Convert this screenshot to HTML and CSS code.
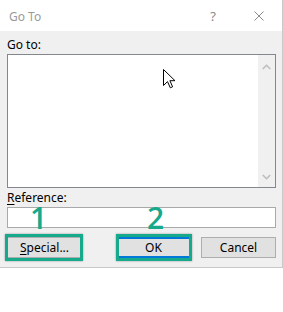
FILE: index.html
```html
<!DOCTYPE html>
<html>
<head>
<meta charset="utf-8">
<link rel="stylesheet" href="styles.css">
</head>
<body>
<div class="dialog">
  <div class="titlebar">
    <span class="title">Go To</span>
    <span class="help">?</span>
    <svg class="close" width="10" height="10" viewBox="0 0 10 10"><path d="M0.5 0.5L9.5 9.5M9.5 0.5L0.5 9.5" stroke="#8a8a8a" stroke-width="1" fill="none"/></svg>
  </div>
  <div class="content">
    <div class="label first">Go to:</div>
    <div class="listbox">
      <div class="listarea"></div>
      <div class="scrollbar">
        <svg width="9" height="6" viewBox="0 0 9 6"><path d="M0.8 5L4.5 1.3L8.2 5" stroke="#bdbdbd" stroke-width="1.6" fill="none"/></svg>
        <svg width="9" height="6" viewBox="0 0 9 6"><path d="M0.8 1L4.5 4.7L8.2 1" stroke="#bdbdbd" stroke-width="1.6" fill="none"/></svg>
      </div>
    </div>
    <div class="label"><u>R</u>eference:</div>
    <div class="input"></div>
    <div class="buttons">
      <div class="btn special hl"><u>S</u>pecial...</div>
      <div class="btn ok hl2">OK</div>
      <div class="btn cancel">Cancel</div>
    </div>
  </div>
</div>
<div class="num n1">1</div>
<div class="num n2">2</div>
<svg class="cursor" width="13" height="20" viewBox="0 0 13 20"><path d="M0.5 0.5L0.5 16.5L4.5 12.6L7.3 18.8L9.6 17.8L6.9 11.7L12 11.7Z" fill="#fff" stroke="#000" stroke-width="1" stroke-linejoin="miter"/></svg>
</body>
</html>
```
FILE: styles.css
```css
html, body {
  margin: 0;
  padding: 0;
  background: #ffffff;
}
body {
  width: 283px;
  height: 312px;
  position: relative;
  overflow: hidden;
  font-family: "Noto Sans", "Open Sans", "Liberation Sans", sans-serif;
  font-size: 12px;
  color: #000;
}
.dialog {
  border-right: 1px solid #c9c9c9;
  box-sizing: border-box;
  width: 283px;
}
.titlebar {
  height: 31px;
  background: #fff;
  display: flex;
  align-items: center;
  box-sizing: border-box;
  padding-left: 9px;
}
.title {
  color: #9a9a9a;
  font-size: 12px;
  flex: 1;
  margin-top: 1px;
}
.help {
  color: #8a8a8a;
  font-size: 13px;
  margin-right: 38px;
}
.close {
  margin-right: 18px;
}
.content {
  background: #f0f0f0;
  height: 237px;
  box-sizing: border-box;
  padding: 0 6px 0 7px;
  border-bottom: 1px solid #c9c9c9;
  display: flex;
  flex-direction: column;
}
.label {
  height: 16px;
  line-height: 16px;
  margin-top: 2px;
}
.label.first {
  margin-top: 6px;
  margin-bottom: 1px;
}
.label u {
  text-decoration-thickness: 1px;
  text-underline-offset: 2px;
}
.listbox {
  height: 134px;
  border: 1px solid #828790;
  box-sizing: border-box;
  display: flex;
  background: #fff;
}
.listarea {
  flex: 1;
}
.scrollbar {
  width: 17px;
  background: #f0f0f0;
  display: flex;
  flex-direction: column;
  justify-content: space-between;
  align-items: center;
  padding: 9px 0 7px;
  box-sizing: border-box;
}
.input {
  height: 21px;
  margin-top: 1px;
  border: 1px solid #a9a9a9;
  background: #fff;
  box-sizing: border-box;
}
.buttons {
  display: flex;
  margin-top: 9px;
  gap: 10px;
}
.btn {
  width: 75px;
  height: 21px;
  box-sizing: border-box;
  border: 1px solid #adadad;
  background: #e1e1e1;
  display: flex;
  align-items: center;
  justify-content: center;
  line-height: 1;
  position: relative;
}
.btn u {
  text-decoration-thickness: 1px;
  text-underline-offset: 2px;
}
.special {
  margin-right: 24px;
}
.ok {
  border: 2px solid #0078d7;
}
.hl::after {
  content: "";
  position: absolute;
  left: -3px;
  top: -4px;
  right: -2px;
  bottom: -4px;
  border: 3px solid #17a98b;
  box-shadow: 0 0 2px rgba(0,0,0,0.35);
}
.hl2::after {
  content: "";
  position: absolute;
  left: -2px;
  top: -5px;
  right: -3px;
  bottom: -5px;
  border: 3px solid #17a98b;
  box-shadow: 0 0 2px rgba(0,0,0,0.35);
}
.num {
  position: absolute;
  color: #17a98b;
  font-family: "Open Sans", "Noto Sans", sans-serif;
  font-weight: 600;
  font-size: 30px;
  line-height: 22px;
}
.n1 {
  left: 30px;
  top: 207px;
}
.n2 {
  left: 147px;
  top: 207px;
}
.cursor {
  position: absolute;
  left: 163px;
  top: 69px;
}
```
